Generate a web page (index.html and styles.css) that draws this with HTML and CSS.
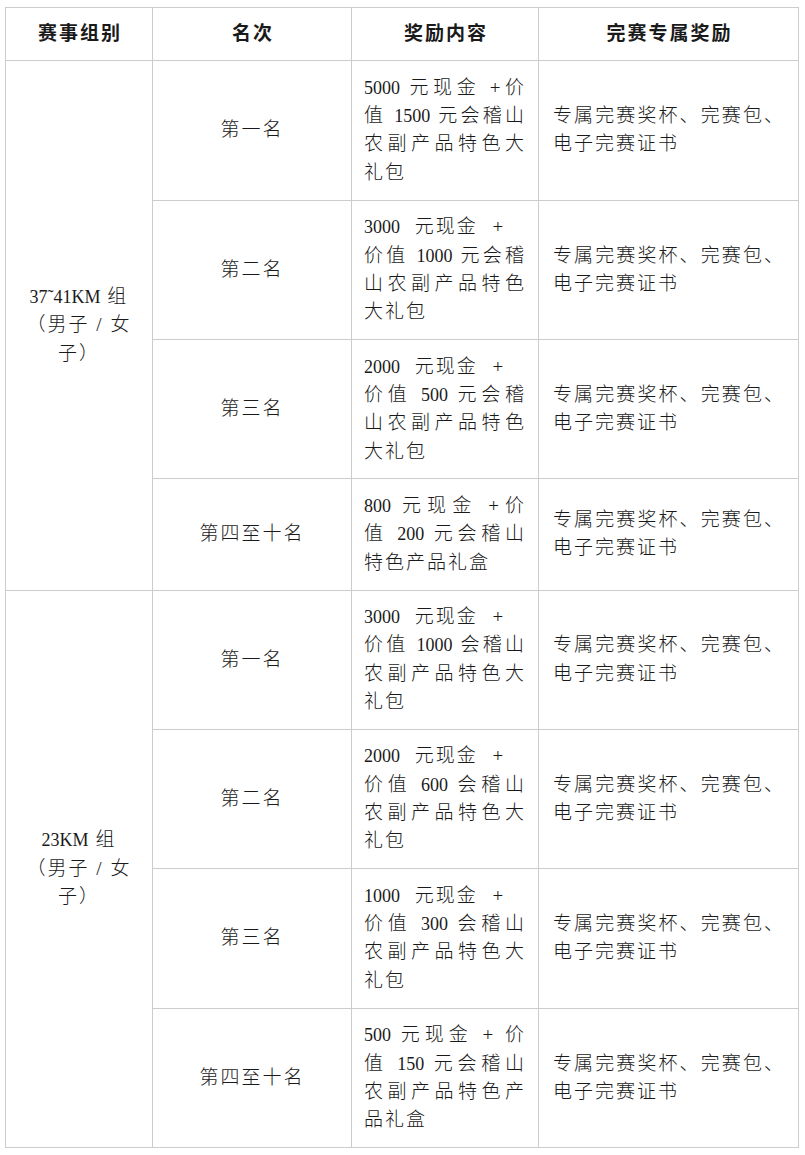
FILE: index.html
```html
<!DOCTYPE html>
<html lang="zh-CN">
<head>
<meta charset="utf-8">
<title>奖励设置</title>
<link rel="stylesheet" href="styles.css">
</head>
<body>
<table class="prize-table">
  <colgroup>
    <col class="c1"><col class="c2"><col class="c3"><col class="c4">
  </colgroup>
  <thead>
    <tr><th>赛事组别</th><th>名次</th><th>奖励内容</th><th>完赛专属奖励</th></tr>
  </thead>
  <tbody>
    <tr>
      <td rowspan="4" class="grp"><span class="ln"><span class="n">37˜41KM</span> 组</span><span class="ln">（男子 / 女</span><span class="ln">子）</span></td>
      <td class="rank">第一名</td>
      <td class="award"><span class="ln j"><span class="n">5000</span> 元现金 +价</span><span class="ln j">值 <span class="n">1500</span> 元会稽山</span><span class="ln j">农副产品特色大</span><span class="ln">礼包</span></td>
      <td class="extra"><span class="ln j">专属完赛奖杯、完赛包、</span><span class="ln">电子完赛证书</span></td>
    </tr>
    <tr>
      <td class="rank">第二名</td>
      <td class="award"><span class="ln w"><span class="n">3000</span> 元现金 +</span><span class="ln j">价值 <span class="n">1000</span> 元会稽</span><span class="ln j">山农副产品特色</span><span class="ln">大礼包</span></td>
      <td class="extra"><span class="ln j">专属完赛奖杯、完赛包、</span><span class="ln">电子完赛证书</span></td>
    </tr>
    <tr>
      <td class="rank">第三名</td>
      <td class="award"><span class="ln w"><span class="n">2000</span> 元现金 +</span><span class="ln j">价值 <span class="n">500</span> 元会稽</span><span class="ln j">山农副产品特色</span><span class="ln">大礼包</span></td>
      <td class="extra"><span class="ln j">专属完赛奖杯、完赛包、</span><span class="ln">电子完赛证书</span></td>
    </tr>
    <tr>
      <td class="rank">第四至十名</td>
      <td class="award"><span class="ln j"><span class="n">800</span> 元现金 +价</span><span class="ln j">值 <span class="n">200</span> 元会稽山</span><span class="ln">特色产品礼盒</span></td>
      <td class="extra"><span class="ln j">专属完赛奖杯、完赛包、</span><span class="ln">电子完赛证书</span></td>
    </tr>
    <tr>
      <td rowspan="4" class="grp"><span class="ln"><span class="n">23KM</span> 组</span><span class="ln">（男子 / 女</span><span class="ln">子）</span></td>
      <td class="rank">第一名</td>
      <td class="award"><span class="ln w"><span class="n">3000</span> 元现金 +</span><span class="ln j">价值 <span class="n">1000</span> 会稽山</span><span class="ln j">农副产品特色大</span><span class="ln">礼包</span></td>
      <td class="extra"><span class="ln j">专属完赛奖杯、完赛包、</span><span class="ln">电子完赛证书</span></td>
    </tr>
    <tr>
      <td class="rank">第二名</td>
      <td class="award"><span class="ln w"><span class="n">2000</span> 元现金 +</span><span class="ln j">价值 <span class="n">600</span> 会稽山</span><span class="ln j">农副产品特色大</span><span class="ln">礼包</span></td>
      <td class="extra"><span class="ln j">专属完赛奖杯、完赛包、</span><span class="ln">电子完赛证书</span></td>
    </tr>
    <tr>
      <td class="rank">第三名</td>
      <td class="award"><span class="ln w"><span class="n">1000</span> 元现金 +</span><span class="ln j">价值 <span class="n">300</span> 会稽山</span><span class="ln j">农副产品特色大</span><span class="ln">礼包</span></td>
      <td class="extra"><span class="ln j">专属完赛奖杯、完赛包、</span><span class="ln">电子完赛证书</span></td>
    </tr>
    <tr>
      <td class="rank">第四至十名</td>
      <td class="award"><span class="ln j"><span class="n">500</span> 元现金 + 价</span><span class="ln j">值 <span class="n">150</span> 元会稽山</span><span class="ln j">农副产品特色产</span><span class="ln">品礼盒</span></td>
      <td class="extra"><span class="ln j">专属完赛奖杯、完赛包、</span><span class="ln">电子完赛证书</span></td>
    </tr>
  </tbody>
</table>
</body>
</html>
```

FILE: styles.css
```css
html, body {
  margin: 0;
  padding: 0;
  background: #ffffff;
}

body {
  font-family: "Liberation Serif", "Noto Sans CJK SC", serif;
  font-size: 19px;
  color: #1a1a1a;
}

.prize-table {
  margin: 7px 0 0 5px;
  width: 793px;
  border-collapse: collapse;
  table-layout: fixed;
}

.c1 { width: 147px; }
.c2 { width: 199px; }
.c3 { width: 187px; }
.c4 { width: 260px; }

.prize-table th,
.prize-table td {
  border: 1px solid #cccccc;
  vertical-align: middle;
  line-height: 28.3px;
  letter-spacing: 2px;
  white-space: nowrap;
}

.prize-table th {
  padding: 12px 0 12px 2px;
  font-weight: 700;
  text-align: center;
}

.prize-table td {
  padding: 12.6px 0;
  font-weight: 300;
}

.grp {
  text-align: center;
  padding-left: 2px;
}

.rank {
  text-align: center;
  padding-left: 2px;
}

.prize-table td.award {
  padding: 12.6px 12px;
  text-align: left;
}

.prize-table td.extra {
  padding: 12.6px 13px 12.6px 14px;
  text-align: left;
}

.ln {
  display: block;
}

.j {
  text-align-last: justify;
}

.w {
  word-spacing: 8px;
}

.n {
  font-size: 18px;
  letter-spacing: 0;
}
```
